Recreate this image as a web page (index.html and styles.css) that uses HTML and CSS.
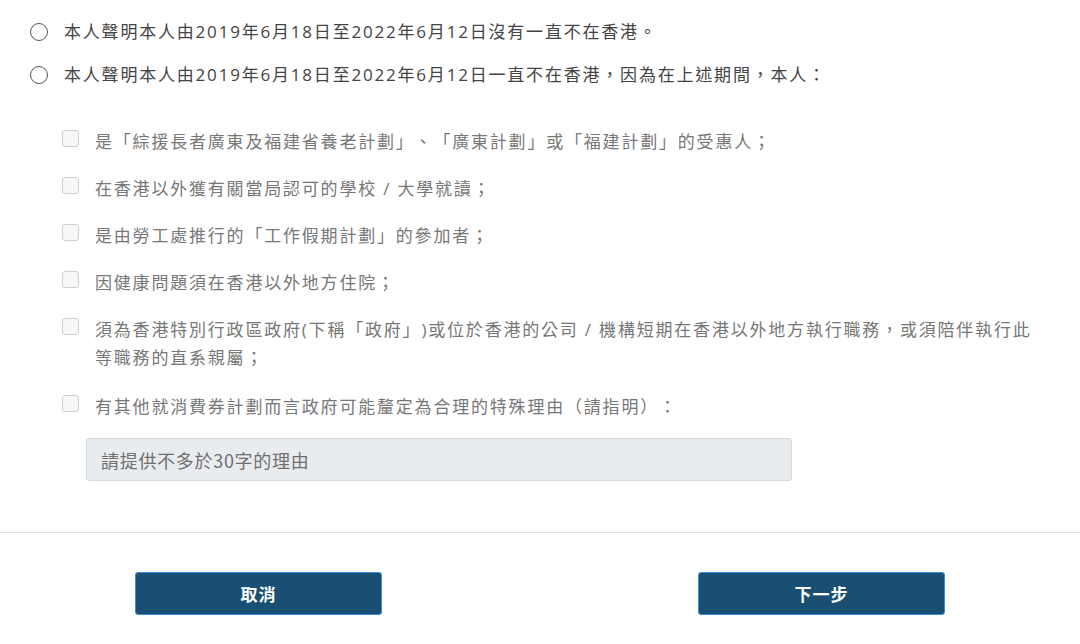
FILE: index.html
```html
<!doctype html>
<html lang="zh-TW">
 <head>
  <meta charset="utf-8">
  <title>聲明</title>
  <link rel="stylesheet" href="styles.css">
 </head>
 <body>
  <form class="declare-form">
   <div class="options">
    <label class="radio-row"><input type="radio" name="stay"><span>本人聲明本人由2019年6月18日至2022年6月12日沒有一直不在香港。</span></label>
    <label class="radio-row"><input type="radio" name="stay"><span>本人聲明本人由2019年6月18日至2022年6月12日一直不在香港，因為在上述期間，本人：</span></label>

    <div class="reasons">
     <label class="check-row"><input type="checkbox"><span>是「綜援長者廣東及福建省養老計劃」、「廣東計劃」或「福建計劃」的受惠人；</span></label>
     <label class="check-row"><input type="checkbox"><span>在香港以外獲有關當局認可的學校 / 大學就讀；</span></label>
     <label class="check-row"><input type="checkbox"><span>是由勞工處推行的「工作假期計劃」的參加者；</span></label>
     <label class="check-row"><input type="checkbox"><span>因健康問題須在香港以外地方住院；</span></label>
     <label class="check-row two-line"><input type="checkbox"><span>須為香港特別行政區政府(下稱「政府」)或位於香港的公司 / 機構短期在香港以外地方執行職務，或須陪伴執行此等職務的直系親屬；</span></label>
     <label class="check-row last"><input type="checkbox"><span>有其他就消費券計劃而言政府可能釐定為合理的特殊理由（請指明）：</span></label>
     <input type="text" class="reason-input" placeholder="請提供不多於30字的理由" disabled>
    </div>
   </div>

   <div class="actions">
    <button type="button" class="btn">取消</button>
    <button type="button" class="btn">下一步</button>
   </div>
  </form>
 </body>
</html>
```

FILE: styles.css
```css
body {
  margin: 0;
  background-color: #fff;
  font-family: "Open Sans", "Noto Sans CJK TC", sans-serif;
  font-size: 17px;
  color: #444;
  text-spacing-trim: space-all;
}

.options {
  padding: 18px 32px 51px 30px;
  border-bottom: 1px solid #e0e0e0;
}

.radio-row {
  display: flex;
  align-items: center;
  gap: 16px;
  line-height: 28px;
  letter-spacing: 1.8px;
  margin-bottom: 15px;
}

.radio-row input {
  appearance: none;
  margin: 0;
  flex: none;
  width: 18px;
  height: 18px;
  border: 1.3px solid #555;
  border-radius: 50%;
  background-color: #fff;
}

.reasons {
  padding: 24px 0 0 32px;
}

.check-row {
  display: flex;
  align-items: flex-start;
  gap: 16px;
  line-height: 28px;
  letter-spacing: 1.8px;
  color: #777;
  margin-bottom: 19px;
}

.check-row.two-line {
  margin-bottom: 21px;
}

.check-row.last {
  margin-bottom: 17px;
}

.check-row input {
  appearance: none;
  margin: 2px 0 0;
  flex: none;
  width: 17px;
  height: 17px;
  border: 1px solid #cfcfcf;
  border-radius: 3px;
  background-color: #f7f7f7;
}

.reason-input {
  display: block;
  box-sizing: border-box;
  width: 706px;
  height: 43px;
  margin-left: 24px;
  padding: 0 14px;
  font-family: "Noto Sans CJK TC", sans-serif;
  font-size: 18px;
  letter-spacing: 0.7px;
  background-color: #e9ecef;
  border: 1px solid #d6d9dc;
  border-radius: 3px;
}

.reason-input::placeholder {
  color: #6f6f6f;
}

.actions {
  display: flex;
  justify-content: space-between;
  padding: 39px 135px 0;
}

.btn {
  width: 247px;
  height: 43px;
  background-color: #1a4f74;
  color: #fff;
  border: 1px solid #3b8edb;
  border-radius: 3px;
  font-family: "Noto Sans CJK TC", sans-serif;
  font-size: 17px;
  font-weight: bold;
  letter-spacing: 1px;
  cursor: pointer;
}
```
